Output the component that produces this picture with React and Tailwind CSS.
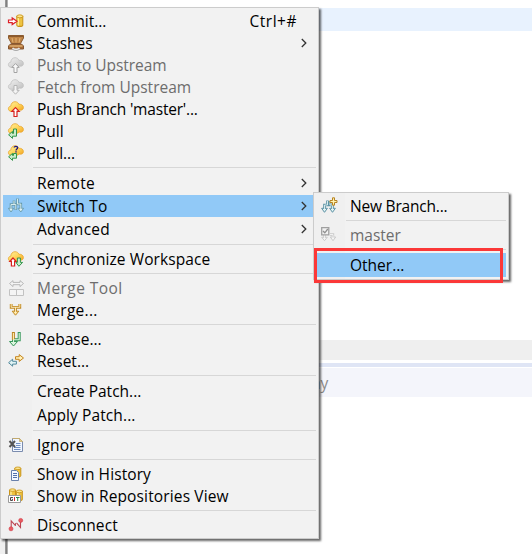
const Svg = ({ children }) => (
  <svg width="16" height="16" viewBox="0 0 16 16" fill="none" className="block overflow-visible">
    {children}
  </svg>
);

const CLOUD = 'M3.4 10.3C1.4 10.3.4 9.2.4 7.7.4 6.2 1.4 5.3 2.8 5.2 2.9 2.6 4.6.7 7 .7c2 0 3.4 1 3.9 2.6 2.5-.3 4.5 1.1 4.5 3.2 0 1.7-1.1 2.7-2.7 2.7-.7 0-1.1-.1-1.6-.3-.6 1-1.5 1.4-2.5 1.4z';

const Cloud = ({ gray }) => (
  <>
    <defs>
      <linearGradient id={gray ? 'cg' : 'cy'} x1="0" y1="0" x2="1" y2="1">
        <stop offset="0" stopColor={gray ? '#f0f0f0' : '#fff0a0'} />
        <stop offset=".5" stopColor={gray ? '#d9d9d9' : '#ffd65c'} />
        <stop offset="1" stopColor={gray ? '#bcbcbc' : '#f0a020'} />
      </linearGradient>
    </defs>
    <path d={CLOUD} fill={gray ? 'url(#cg)' : 'url(#cy)'} stroke={gray ? '#c0c0c0' : '#e9a62d'} strokeWidth=".8" />
  </>
);

const UP = 'M7.5 6.6 11.2 10.4H9V15.5H6V10.4H3.8z';

const Repo = () => (
  <>
    <path d="M.5 1.7v7.6C.5 11 6.5 11 6.5 9.3V1.7z" fill="#eec341" stroke="#c99318" />
    <path d="M2 2.5v7.3" stroke="#fff0a0" strokeWidth="1.3" />
    <ellipse cx="3.5" cy="1.8" rx="3" ry="1.3" fill="#fbe58e" stroke="#c99318" strokeWidth=".8" />
  </>
);

const icons = {
  commit: (
    <Svg>
      <g transform="translate(8.3 1.3) scale(1 1.14)"><Repo /></g>
      <path d="M.5 7H4.2V5L9 8.3 4.2 11.6V9.6H.5z" fill="#fff" stroke="#dd2027" strokeWidth="1.2" />
    </Svg>
  ),
  stash: (
    <Svg>
      <path d="M.5.5H15.5V3L12.5 8.5H3.5L.5 3z" fill="#c08445" stroke="#8a5a30" />
      <path d="M4 3 5 7.5M8 3V7.5M12 3 11 7.5" stroke="#e3b273" />
      <path d="M1 1.5H15" stroke="#8c5a2c" />
      <path d="M2.5 9H13.5L15.5 11V14H.5V11z" fill="#a86c36" stroke="#855631" />
      <path d="M1.5 11H14.5" stroke="#e8b878" strokeWidth="1.3" />
      <path d="M4.5 13C5.5 14.8 10.5 14.8 11.5 13" stroke="#e9e9e9" strokeWidth="1.6" />
      <path d="M4.5 14.3C6 16 10 16 11.5 14.3" stroke="#9a9a9a" strokeWidth=".8" />
    </Svg>
  ),
  pushGray: <Svg><Cloud gray /><path d={UP} fill="#f8f8f8" stroke="#a3a3a3" /></Svg>,
  fetchGray: <Svg><Cloud gray /><path d="M6 6.5H9V11.3H11.2L7.5 15.2 3.8 11.3H6z" fill="#f4f4f4" stroke="#b5b5b5" /></Svg>,
  push: <Svg><Cloud /><path d={UP} fill="#fff" stroke="#d8201e" strokeWidth="1.2" /></Svg>,
  pull: <Svg><Cloud /><path d="M5.5 6H8.5V13.2H4.5V15.4L.6 11.8 4.5 8.4V10.4H5.5z" fill="#caebcb" stroke="#32964a" /></Svg>,
  pullAsk: (
    <Svg>
      <Cloud /><path d="M5.5 8.5H8.5V13.2H4.5V15.4L.6 11.8 4.5 8.4V10.4H5.5z" fill="#caebcb" stroke="#32964a" />
      <path d="M6.2 2.6C6.2 1 9.6 1 9.6 2.7 9.6 4 8 3.9 8 5.4" stroke="#1d1685" strokeWidth="1.3" />
      <path d="M7.3 6.2H8.7V7.5H7.3z" fill="#1d1685" />
    </Svg>
  ),
  switch: (
    <Svg>
      <path d="M6 2.5V6.5H3V11M9.5 .5V6H12.8V10.5M6 6.5H7.8V12" stroke="#6599a9" strokeWidth="2.6" />
      <path d="M.4 10.3H5.6L3 14z M10 10.3H15.6L12.8 14z" fill="#e2f4f4" stroke="#6599a9" strokeWidth=".9" />
      <path d="M6 2.8V6.5H3V11.5M9.5 .8V6H12.8V11.5M6 6.5H7.8V11.5" stroke="#e2f4f4" strokeWidth=".9" />
    </Svg>
  ),
  sync: (
    <Svg>
      <Cloud />
      <path d="M5 7 8.2 10.4H6.6V15H3.4V10.4H1.8z" fill="#fff" stroke="#d8201e" strokeWidth="1.2" />
      <path d="M9.4 7H12.4V11.4H14.6L10.9 15.3 7.9 11.4H9.4z" fill="#caebcb" stroke="#32964a" />
    </Svg>
  ),
  mergeTool: (
    <Svg>
      <path d="M1.5 9.5H15.5V15.5H1.5zM8.5 9.5V15.5" fill="#f4f4f4" stroke="#c2c2c2" />
      <path d="M1.5 3.5 5 .6V2.4H12V.6L15.5 3.5 12 6.6V4.7H5V6.6z" fill="#f4f4f4" stroke="#b8b8b8" />
    </Svg>
  ),
  merge: (
    <Svg>
      <path d="M3.2 2V5.3H11.8V2M7.5 5.3V10" stroke="#c18a24" strokeWidth="2.8" />
      <path d="M4.2 9.2H10.8L7.5 13.2z" fill="#ffe9a6" stroke="#c18a24" />
      <path d="M3.2 1.5V5.3H11.8V1.5M7.5 5.3V11" stroke="#fff0c5" strokeWidth=".9" />
    </Svg>
  ),
  rebase: (
    <Svg>
      <path d="M11.2 1V8.8H5.5V12" stroke="#37985a" strokeWidth="3" />
      <path d="M5.4 1V8.8" stroke="#bd8424" strokeWidth="3" />
      <path d="M1.5 10.5H9.5L5.5 15z" fill="#dcf5df" stroke="#37985a" />
      <path d="M11.2 2V8.8H5.5V12" stroke="#dcf5df" strokeWidth="1.1" />
      <path d="M5.4 2V8.8" stroke="#fff0b5" strokeWidth="1.1" />
    </Svg>
  ),
  reset: (
    <Svg>
      <path d="M7.5 3.7H11.2V1.6L15.5 5 11.2 8.4V6.3H7.5z" fill="#fff0b5" stroke="#c4831d" />
      <path d="M.6 9.7 4.6 6.2V8.3H8.4V11.1H4.6V13.2z" fill="#e1f3f5" stroke="#528a9d" />
    </Svg>
  ),
  ignore: (
    <Svg>
      <path d="M4.5 1.5H11.5L14.5 4.5V14.5H4.5z" fill="#f2f7ff" stroke="#7b8cae" />
      <path d="M4.5 1.5H11.5L14.5 4.5" stroke="#c2a96c" />
      <path d="M11.5 1.5V4.5H14.5z" fill="#e6ca87" stroke="#c2a96c" strokeWidth=".7" />
      <path d="M8 6.5H12.5M8 8.5H12.5M6 10.5H12.5M6 12.5H12.5" stroke="#7190c4" />
      <path d="M1.5 4 7 10M7 4 1.5 10" stroke="#555" strokeWidth="2" />
    </Svg>
  ),
  history: (
    <Svg>
      <g transform="translate(6.3 .5)"><Repo /></g>
      <path d="M3.5 4.5H8.5L10.5 6.5V14.5H3.5z" fill="#f6f9ff" stroke="#6980ab" />
      <path d="M5 7.5H9M5 9.5H9M5 11.5H9" stroke="#5271ab" />
    </Svg>
  ),
  repos: (
    <Svg>
      <g transform="translate(1 .3)"><Repo /></g>
      <g transform="translate(7.8 1.5) scale(1 1.05)"><Repo /></g>
      <path d="M.5 7.5H12.5V14.5H.5z" fill="#fff" stroke="#9a9a9a" />
      <path d="M4.9 9.5H2.5V12.5H4.5V11.2H3.8" stroke="#444" />
      <path d="M6.5 9V13" stroke="#d12b2b" />
      <path d="M8 9.5H11.5M9.7 9.5V13" stroke="#278443" />
    </Svg>
  ),
  disconnect: (
    <Svg>
      <path d="M3.2 11V4L7.5 8.7M8.5 5.8 12.5 10.5V4" stroke="#bd4653" strokeWidth="1.1" />
      <path d="M7.5 8.7V6.2" stroke="#bd4653" />
      <circle cx="3" cy="11.8" r="2" fill="#ea5a60" stroke="#cf3944" strokeWidth=".6" />
      <circle cx="12.7" cy="3.4" r="2" fill="#ea5a60" stroke="#cf3944" strokeWidth=".6" />
    </Svg>
  ),
  newBranch: (
    <Svg>
      <path d="M6.5 2.5V7H3.5V11.5M9 3V7H11.5V11.5" stroke="#5d93a5" strokeWidth="2.6" />
      <path d="M.6 10.3H6.4L3.5 14.3z M8.6 10.3H14.4L11.5 14.3z" fill="#e2f4f4" stroke="#5d93a5" />
      <path d="M6.5 3V7H3.5V12M9 3V7H11.5V12" stroke="#e2f4f4" strokeWidth=".9" />
      <path d="M11.5-.2H13.5V2.5H16V4.5H13.5V7.2H11.5V4.5H9V2.5H11.5z" fill="#fff2b0" stroke="#b78322" />
    </Svg>
  ),
  current: (
    <Svg>
      <path d="M3.5 8V11M9 7.5H12V10.5" stroke="#c9c9c9" strokeWidth="2.4" />
      <path d="M.7 10.3H6.3L3.5 13.7zM9.3 10H14.7L12 13.7z" fill="#f5f5f5" stroke="#c6c6c6" strokeWidth=".9" />
      <path d="M3.5 8V11.5M9 7.5H12V11" stroke="#f5f5f5" strokeWidth=".9" />
      <path d="M.7.7H7.8V7.8H.7z" fill="#f2f2f2" stroke="#a0a0a0" strokeWidth="1.3" />
      <path d="M2 4 3.8 5.8 6.8 2" stroke="#909090" strokeWidth="1.3" />
    </Svg>
  ),
};

const mainItems = [
  { label: 'Commit...', icon: 'commit', keys: 'Ctrl+#' },
  { label: 'Stashes', icon: 'stash', more: true },
  { label: 'Push to Upstream', icon: 'pushGray', off: true, tracking: 'tracking-[-0.05px]' },
  { label: 'Fetch from Upstream', icon: 'fetchGray', off: true },
  { label: "Push Branch 'master'...", icon: 'push', tracking: 'tracking-[-0.19px]' },
  { label: 'Pull', icon: 'pull' },
  { label: 'Pull...', icon: 'pullAsk', tracking: 'tracking-[-0.15px]' },
  null,
  { label: 'Remote', more: true, tall: true, tracking: 'tracking-[0.3px]' },
  { label: 'Switch To', icon: 'switch', more: true, active: true, tracking: 'tracking-[0.2px]' },
  { label: 'Advanced', more: true, tall: true, tracking: 'tracking-[0.3px]' },
  null,
  { label: 'Synchronize Workspace', icon: 'sync', tracking: 'tracking-[0.08px]' },
  null,
  { label: 'Merge Tool', icon: 'mergeTool', off: true, tracking: 'tracking-[0.45px]' },
  { label: 'Merge...', icon: 'merge', tracking: 'tracking-[0.3px]' },
  null,
  { label: 'Rebase...', icon: 'rebase' },
  { label: 'Reset...', icon: 'reset' },
  null,
  { label: 'Create Patch...', tall: true },
  { label: 'Apply Patch...', tall: true, tracking: 'tracking-[0.1px]' },
  null,
  { label: 'Ignore', icon: 'ignore', tracking: 'tracking-[0.15px]' },
  null,
  { label: 'Show in History', icon: 'history', tracking: 'tracking-[0.1px]' },
  { label: 'Show in Repositories View', icon: 'repos', tracking: 'tracking-[0.14px]' },
  null,
  { label: 'Disconnect', icon: 'disconnect', tracking: 'tracking-[0.08px]' },
];

const subItems = [
  { label: 'New Branch...', icon: 'newBranch', tracking: 'tracking-[-0.2px]' },
  null,
  { label: 'master', icon: 'current', off: true },
  null,
  { label: 'Other...', tall: true, active: true },
];

const Item = ({ item }) => {
  if (!item) {
    return <div className="flex h-[7px] items-center pl-[30px]"><div className="h-px w-full bg-[#d7d7d7]" /></div>;
  }
  const height = item.tall ? 'h-6' : 'h-[22px]';
  const bg = item.active ? 'bg-[#91c9f7]' : '';
  const color = item.off ? 'text-[#6d6d6d]' : 'text-black';
  return (
    <div className={`flex items-center ${height} ${bg} ${color}`}>
      <div className="w-[34px] shrink-0 pl-[5px]">{item.icon && icons[item.icon]}</div>
      <span className={`grow whitespace-nowrap ${item.tracking || ''}`}>{item.label}</span>
      {item.keys && <span className="mr-[19px] whitespace-nowrap tracking-[0.5px]">{item.keys}</span>}
      {item.more && (
        <svg width="6" height="10" viewBox="0 0 6 10" fill="none" className="mr-[9px] shrink-0">
          <path d="M.8 1 4.8 5 .8 9" stroke="#333" strokeWidth="1.3" />
        </svg>
      )}
    </div>
  );
};

const Menu = ({ items, className }) => (
  <div className={`absolute border border-[#ccc] bg-[linear-gradient(to_right,#f0f0f0_31px,#f2f2f2_31px)] p-0.5 shadow-[2px_2px_2px_0px_rgba(0,0,0,0.6)] ${className}`}>
    {items.map((item, i) => <Item key={i} item={item} />)}
  </div>
);

export default function App() {
  return (
    <div className="relative flex h-[554px] w-[532px] overflow-hidden bg-white font-['Open_Sans','Noto_Sans',sans-serif] text-[15.5px] leading-[22px]">
      <div className="w-[5px] bg-[#f0f0f0]" />
      <div className="w-[3px] bg-[linear-gradient(to_right,#a0a0a0,#808080,#c8c8c8)]" />
      <div className="flex grow flex-col">
        <div className="mt-2 h-[23px] bg-[#e8f2fe]" />
        <div className="mt-[309px] h-5 bg-[#efefef]" />
        <div className="mt-[3px] h-1 bg-[#dfe5f5]" />
        <div className="mt-px flex h-[29px] items-center bg-[#f4f5fb] pl-[304px] text-[#8c8c8c]">ay</div>
      </div>
      <Menu items={mainItems} className="left-0 top-[7px] h-[532px] w-[319px]" />
      <Menu items={subItems} className="left-[313px] top-[192px] h-[88px] w-[196px]" />
      <div className="absolute left-[314px] top-[248px] h-[35px] w-[189px] border-[3px] border-[#fb3838]" />
    </div>
  );
}
